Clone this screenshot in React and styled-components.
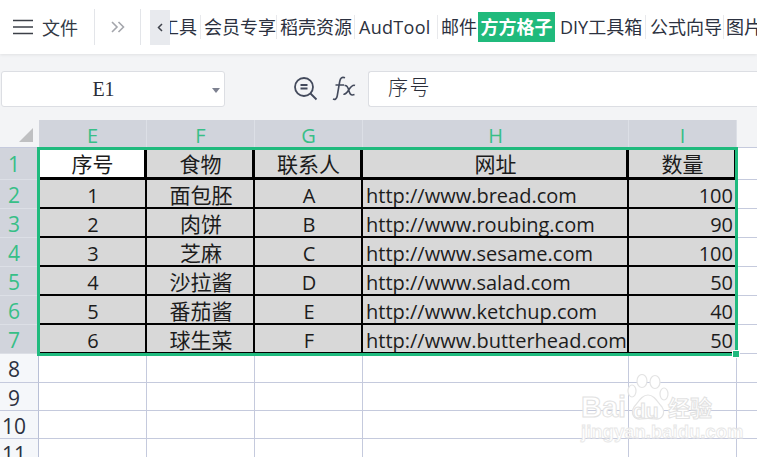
import React from 'react';
import styled, { createGlobalStyle } from 'styled-components';

const CJK = '"Open Sans", "Noto Sans CJK SC", sans-serif';
const GRID = '#c5cadd';
const GREEN = '#1fba7e';
const COLS = [
  { id: 'E', w: 108, align: 'center' },
  { id: 'F', w: 108, align: 'center' },
  { id: 'G', w: 108, align: 'center' },
  { id: 'H', w: 266, align: 'left' },
  { id: 'I', w: 108, align: 'right' },
];
const DATA = [
  ['序号', '食物', '联系人', '网址', '数量'],
  ['1', '面包胚', 'A', 'http://www.bread.com', '100'],
  ['2', '肉饼', 'B', 'http://www.roubing.com', '90'],
  ['3', '芝麻', 'C', 'http://www.sesame.com', '100'],
  ['4', '沙拉酱', 'D', 'http://www.salad.com', '50'],
  ['5', '番茄酱', 'E', 'http://www.ketchup.com', '40'],
  ['6', '球生菜', 'F', 'http://www.butterhead.com', '50'],
];
const TABS = [
  { t: '工具', w: 31, clip: true },
  { t: '会员专享', w: 76, sep: true, pad: 3 },
  { t: '稻壳资源', w: 78, sep: true, pad: 3 },
  { t: 'AudTool', w: 83, sep: true, pad: 4 },
  { t: '邮件', w: 40, pad: 3 },
  { t: '方方格子', w: 77, active: true },
  { t: 'DIY工具箱', w: 91, sep: true, pad: 5 },
  { t: '公式向导', w: 78, sep: true, pad: 4 },
  { t: '图片', w: 40, pad: 2 },
];

const Global = createGlobalStyle`
  html, body { margin: 0; padding: 0; width: 757px; height: 457px; overflow: hidden; background: #fff; }
  * { box-sizing: border-box; }
`;
const Page = styled.div`
  position: relative; width: 757px; height: 457px; overflow: hidden;
  font-family: ${CJK}; color: #222; background: #fff;
`;
const Toolbar = styled.header`
  display: flex; align-items: center; height: 54px; background: #fff; padding-left: 12px;
  box-shadow: 0 1px 3px rgba(0,0,0,.08); position: relative; z-index: 1;
`;
const FileLabel = styled.span`
  margin-left: 8px; width: 52px; font-size: 18px; color: #333a45;
`;
const Divider = styled.i`
  display: block; width: 1px; height: 36px; background: #e3e5e9;
`;
const Overflow = styled.div`
  width: 45px; display: flex; justify-content: center; align-items: center;
`;
const ScrollLeft = styled.div`
  width: 20px; height: 35px; margin-left: 9px; background: #e8eaee; display: flex; align-items: center; justify-content: center;
`;
const TabClip = styled.div`
  flex: 1; min-width: 0; overflow: hidden; display: flex; align-items: center; white-space: nowrap;
`;
const Tab = styled.span`
  flex: none; width: ${p => p.$w}px; overflow: hidden; display: flex;
  justify-content: ${p => (p.$clip ? 'flex-end' : p.$active ? 'center' : 'flex-start')};
  height: ${p => (p.$active ? '30px' : '24px')};
  line-height: ${p => (p.$active ? '30px' : '24px')};
  font-size: 18px; color: #2c3140; letter-spacing: ${p => (p.$latin ? '.3px' : '0')};
  padding: ${p => (p.$clip ? '0 3px 0 0' : `0 0 0 ${p.$pad || 0}px`)};
  font-weight: ${p => (p.$active ? 700 : 400)};
  background: ${p => (p.$active ? '#20ba7c' : 'transparent')};
  ${p => p.$active && 'color: #fff;'}
  ${p => (p.$sep || p.$clip) && 'border-right: 1px solid #e8e9ec;'}
`;
const FormulaBar = styled.div`
  display: flex; align-items: center; height: 66px; background: #f3f4f6; padding: 3px 0 0 1px;
`;
const NameBox = styled.div`
  position: relative; width: 224px; height: 36px; background: #fff; border: 1px solid #dcdee3; border-radius: 3px;
  display: flex; align-items: center; justify-content: center; padding: 2px 19px 0 0;
  font: 20px "Liberation Serif", serif; color: #2a2d38;
`;
const Caret = styled.b`
  position: absolute; right: 4px; top: 16px; border: 4px solid transparent; border-top: 5px solid #7d8190; border-bottom: 0;
`;
const Tools = styled.div`
  display: flex; align-items: center; width: 143px; padding-left: 68px; gap: 14px;
`;
const FormulaInput = styled.div`
  flex: 1; height: 36px; background: #fff; border: 1px solid #dcdee3; border-right: 0; border-radius: 3px 0 0 3px;
  padding-left: 19px; line-height: 32px; font-size: 20px; letter-spacing: 1.5px; color: #2a2d38; font-weight: 300;
`;
const Sheet = styled.div`
  display: flex; flex-direction: column; background: #fff;
`;
const Row = styled.div`
  display: flex; height: ${p => p.$h}px; flex: none;
`;
const Corner = styled.div`
  width: 39px; background: #f3f4f6; border-bottom: 1px solid ${GRID}; display: flex; align-items: flex-end; justify-content: flex-end; padding: 0 6px 5px 0;
`;
const ColHead = styled.div`
  width: ${p => p.$w}px; background: #d1d4dc; color: #37bf87; font-size: 20px; line-height: 29px; text-align: center;
  border-right: 1px solid #dcdfe6; padding-top: 1px; overflow: hidden;
`;
const Spacer = styled.div`
  flex: 1; background: ${p => p.$head ? '#f3f4f6' : '#fff'}; border-bottom: 1px solid ${GRID};
`;
const RowHead = styled.div`
  width: 39px; flex: none; text-align: center; font-size: 21px; padding-right: 10px; line-height: ${p => p.$lh}px; overflow: hidden;
  background: ${p => (p.$sel ? '#d1d4dc' : '#f5f7fa')}; color: ${p => (p.$sel ? '#37bf87' : '#2c3140')};
  border-right: 1px solid ${p => (p.$sel ? '#d1d4dc' : '#b9c0d6')}; border-bottom: 1px solid ${p => (p.$sel ? '#dcdfe6' : GRID)};
`;
const Cell = styled.div`
  width: ${p => p.$w}px; flex: none; overflow: hidden; white-space: nowrap;
  background: ${p => (p.$white ? '#fff' : '#d8d8d8')}; color: #1c1c1c;
  font-size: ${p => (p.$cjk ? 21 : 20)}px; line-height: ${p => p.$lh}px; text-align: ${p => p.$align};
  padding: 0 ${p => (p.$align === 'right' ? '2px' : '0')} 0 ${p => (p.$align === 'left' ? '3px' : p.$align === 'center' ? '2px' : '0')};
  border-right: ${p => p.$bw}px solid #000; border-bottom: ${p => p.$bw}px solid #000;
`;
const Blank = styled.div`
  width: ${p => p.$w}px; flex: none; border-right: 1px solid ${GRID}; border-bottom: 1px solid ${GRID};
`;
const Selection = styled.div`
  position: absolute; left: 37px; top: 147px; width: 701px; height: 209px; border: 3px solid ${GREEN}; pointer-events: none;
`;
const Handle = styled.div`
  position: absolute; right: -4px; bottom: -4px; width: 6px; height: 6px; background: ${GREEN}; outline: 1px solid #fff;
`;
const Watermark = styled.div`
  position: absolute; left: 580px; top: 373px; width: 140px; height: 70px; color: #fff; pointer-events: none;
`;
const BrandLatin = styled.div`
  position: absolute; left: ${p => p.$x}px; top: ${p => p.$y}px; font: 700 ${p => p.$s}px "Liberation Sans", sans-serif;
  -webkit-text-stroke: 1px #e2e2e2; white-space: nowrap;
`;
const BrandCn = styled.div`
  position: absolute; left: 88px; top: 17px; font: 700 22px "Noto Sans CJK SC", sans-serif;
  -webkit-text-stroke: 1px #e2e2e2; white-space: nowrap;
`;
const Site = styled.div`
  position: absolute; left: 1px; top: 48px; font: 700 18.500px "Liberation Sans", sans-serif;
  -webkit-text-stroke: .8px #e6e6e6; white-space: nowrap;
`;
const Paw = styled.svg`
  position: absolute; left: 46px; top: 1px;
`;

const Menu = () => (
  <svg width="22" height="16" viewBox="0 0 22 16" fill="none" stroke="#3c4048" strokeWidth="1.6">
    <path d="M1 1.500h20M1 8h20M1 14.500h20" />
  </svg>
);
const Chevrons = () => (
  <svg width="14" height="14" viewBox="0 0 14 14" fill="none" stroke="#a4a6ac" strokeWidth="1.6">
    <path d="M1 2l5 5-5 5M7.500 2l5 5-5 5" />
  </svg>
);
const SmallLeft = () => (
  <svg width="6" height="9" viewBox="0 0 6 9" fill="none" stroke="#3f434c" strokeWidth="1.500">
    <path d="M5 1L1.500 4.500 5 8" />
  </svg>
);
const ZoomIcon = () => (
  <svg width="25" height="25" viewBox="0 0 25 25" fill="none" stroke="#434a5c" strokeWidth="1.800">
    <circle cx="11" cy="11" r="9" />
    <path d="M7.500 9h7M7.500 12.500h7M17.500 17.500l6 6" />
  </svg>
);
const Fx = () => (
  <svg width="24" height="25" viewBox="0 0 24 25" fill="none" stroke="#434a5c" strokeWidth="1.600">
    <path d="M13 1.800C10 .5 8.300 2 7.700 5.500L5.200 20c-.5 3-2.200 4-4.200 3M3.500 9H12" />
    <path d="M12.500 9.500c2.500-.5 3.300 1 4.200 4.500s1.800 6 5.800 4.500M23 9.500c-2.500-1-4 1-6 4s-3.500 5.500-5.500 4.500" />
  </svg>
);
const Triangle = () => (
  <svg width="14" height="14" viewBox="0 0 14 14"><path d="M14 0v14H0z" fill="#bfc0c2" /></svg>
);

const rowHeights = [32, 29, 29, 29, 29, 29, 29];
const hasCjk = s => /[^\x00-\x7f]/.test(s);

export default function App() {
  return (
    <Page>
      <Global />
      <Toolbar>
        <Menu />
        <FileLabel>文件</FileLabel>
        <Divider />
        <Overflow><Chevrons /></Overflow>
        <Divider />
        <ScrollLeft><SmallLeft /></ScrollLeft>
        <TabClip>
          {TABS.map(x => (
            <Tab key={x.t} $w={x.w} $clip={x.clip} $sep={x.sep} $active={x.active} $pad={x.pad} $latin={!hasCjk(x.t)}>{x.t}</Tab>
          ))}
        </TabClip>
      </Toolbar>
      <FormulaBar>
        <NameBox>E1<Caret /></NameBox>
        <Tools><ZoomIcon /><Fx /></Tools>
        <FormulaInput>序号</FormulaInput>
      </FormulaBar>
      <Sheet>
        <Row $h={28}>
          <Corner><Triangle /></Corner>
          {COLS.map(c => <ColHead key={c.id} $w={c.w}>{c.id}</ColHead>)}
          <Spacer $head />
        </Row>
        {DATA.map((r, i) => (
          <Row key={i} $h={rowHeights[i]}>
            <RowHead $sel $lh={rowHeights[i] + 1}>{i + 1}</RowHead>
            {r.map((v, j) => (
              <Cell
                key={j}
                $w={COLS[j].w}
                $align={i === 0 ? 'center' : COLS[j].align}
                $cjk={hasCjk(v)}
                $white={i === 0 && j === 0}
                $bw={i === 0 ? 3 : 2}
                $lh={i === 0 ? 32 : 31}
              >{v}</Cell>
            ))}
            <Spacer />
          </Row>
        ))}
        {[8, 9, 10, 11].map(n => (
          <Row key={n} $h={n === 8 ? 29 : 28}>
            <RowHead $lh={31}>{n}</RowHead>
            {COLS.map(c => <Blank key={c.id} $w={c.w} />)}
            <Spacer />
          </Row>
        ))}
      </Sheet>
      <Selection><Handle /></Selection>
      <Watermark>
        <Paw width="44" height="50" viewBox="0 0 44 50" fill="#fff" stroke="#e4e4e4" strokeWidth="1.200">
          <ellipse cx="6" cy="17" rx="4" ry="6" />
          <ellipse cx="16" cy="7" rx="5" ry="6.500" />
          <ellipse cx="29" cy="8" rx="5" ry="6.500" />
          <ellipse cx="38" cy="20" rx="4" ry="6" />
          <path d="M22 21c-6 0-9 6-14 12-4 6 0 13 7 12 5-1 9-1 14 0 7 1 11-6 7-12-5-6-8-12-14-12z" />
        </Paw>
        <BrandLatin $x={1} $y={18} $s={29}>Bai</BrandLatin>
        <BrandLatin $x={53} $y={26} $s={21}>du</BrandLatin>
        <BrandCn>经验</BrandCn>
        <Site>jingyan.baidu.com</Site>
      </Watermark>
    </Page>
  );
}
